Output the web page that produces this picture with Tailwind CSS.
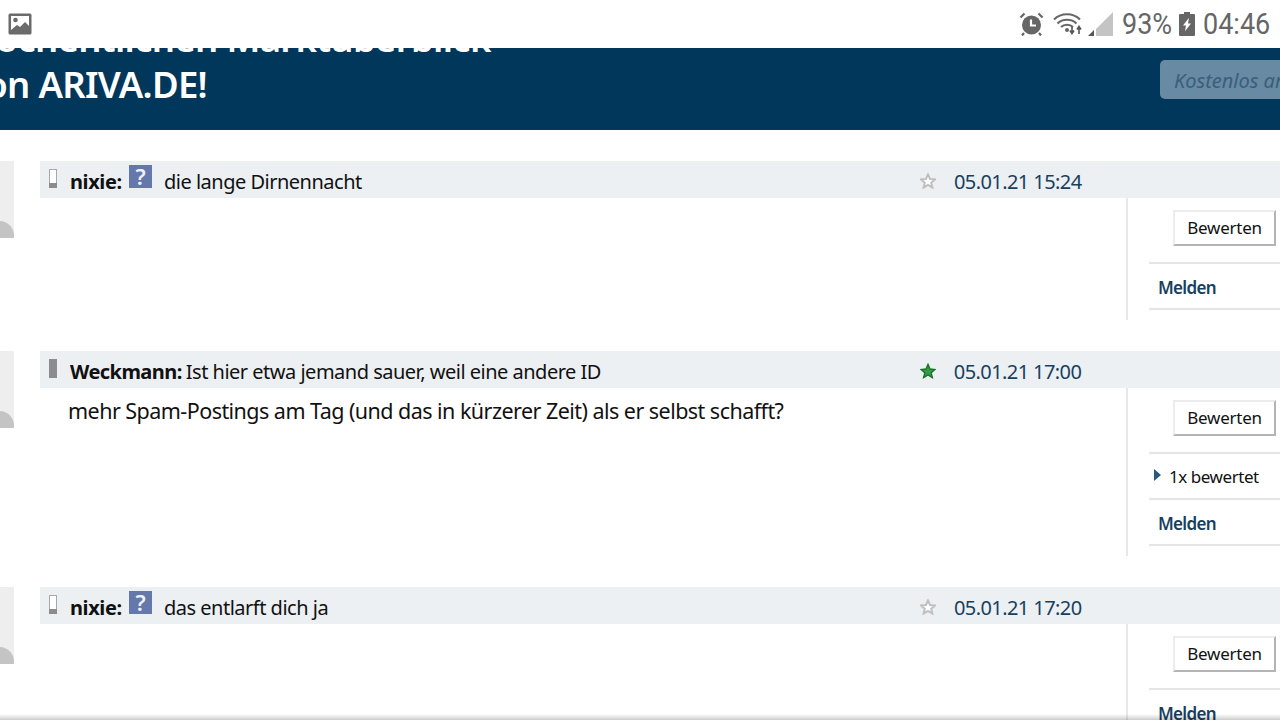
<!DOCTYPE html>
<html lang="de">
<head>
  <meta charset="UTF-8">
  <title>ARIVA.DE</title>
  <script src="https://cdn.jsdelivr.net/npm/@tailwindcss/browser@4"></script>
</head>
<body class="bg-white">
  <div class="relative w-[1280px] h-[720px] overflow-hidden bg-white font-['Noto_Sans',sans-serif] text-[#111111]">
    <!-- Status bar -->
    <header class="h-12 flex items-center justify-between pl-2 pr-[11px] pb-px bg-white font-['Roboto',sans-serif] text-[#666666]">
      <svg class="w-6 h-[22px]" viewBox="0 0 24 22">
        <rect x="0.5" y="0.5" width="23" height="21" rx="1.5" fill="#6b6b6b"/>
        <rect x="3" y="3" width="18" height="14" fill="#fff"/>
        <circle cx="7.5" cy="7" r="2.3" fill="#6b6b6b"/>
        <path d="M3 17l6-5 3 2 5-5 4 4v4z" fill="#6b6b6b"/>
      </svg>
      <div class="flex items-center">
        <svg class="w-[25px] h-6" viewBox="0 0 25 24" fill="none">
          <circle cx="12.5" cy="13" r="9.5" fill="#666"/>
          <path d="M12 7.5v6h5" stroke="#fff" stroke-width="2.2"/>
          <path d="M1.5 5.5l4-4M23.5 5.5l-4-4M5 21l-2 2.500M20 21l2 2.500" stroke="#666" stroke-width="2.200"/>
        </svg>
        <svg class="ml-[9px] w-8 h-[23px]" viewBox="0 0 32 23" fill="none">
          <path d="M1 7.500C8 .5 20 .5 27 7.500M4.500 11.500C9.500 6.500 18.500 6.500 23.500 11.500M8 15C11 12 17 12 20 15" stroke="#666" stroke-width="2"/>
          <circle cx="14" cy="18" r="2" fill="#666"/>
          <path d="M19 15v6M17 18.500l2 3 2-3M26 22v-7M24 17.500l2-3 2 3" stroke="#555" stroke-width="1.600"/>
        </svg>
        <svg class="ml-[3px] w-[25px] h-6" viewBox="0 0 25 24">
          <path d="M25 0v24H8v-7z" fill="#c4c4c4"/>
          <path d="M0 24l6-6v6z" fill="#555"/>
        </svg>
        <span class="ml-[9px] w-12 text-[30px] leading-none whitespace-nowrap scale-x-90 origin-left">93%</span>
        <svg class="ml-[9px] w-4 h-6" viewBox="0 0 16 25" preserveAspectRatio="none">
          <path d="M5 0h6v2h4a1 1 0 0 1 1 1v21a1 1 0 0 1-1 1H1a1 1 0 0 1-1-1V3a1 1 0 0 1 1-1h4z" fill="#666"/>
          <path d="M10 6l-6 8h3l-1 6 6-8H9z" fill="#fff"/>
        </svg>
        <span class="ml-2 w-[66px] text-[30px] leading-none whitespace-nowrap scale-x-90 origin-left">04:46</span>
      </div>
    </header>

    <!-- Banner -->
    <section class="h-[82px] overflow-hidden bg-[#00375b] flex justify-between text-white">
      <div class="-mt-[33px] -ml-[34px] font-semibold text-[36.500px] leading-[46px] whitespace-nowrap tracking-[-0.700px]">
        <p>wöchentlichen Marktüberblick</p>
        <p>von ARIVA.DE!</p>
      </div>
      <div class="mt-3 h-[39px] w-[140px] -mr-5 pl-[14px] rounded-[5px] bg-[#688aa2] text-[#3a5f7c] italic text-xl leading-[41px] whitespace-nowrap overflow-hidden">Kostenlos anmelden</div>
    </section>

    <main class="pt-[31px]">
      <!-- Post 1 -->
      <article class="flex h-[159px]">
        <div class="w-10 shrink-0">
          <div class="relative w-3.5 h-[77px] bg-[#eeeeee] overflow-hidden">
            <div class="absolute -left-[15px] top-[60px] w-[29px] h-[29px] rounded-full bg-[#c4c4c4]"></div>
          </div>
        </div>
        <div class="flex-1">
          <div class="h-[37px] flex items-center pt-1 bg-[#ecf0f3] text-xl">
            <svg class="ml-[9px] w-2 h-[19px] -mt-[6px]" viewBox="0 0 8 19">
              <rect x="0.500" y="0.500" width="7" height="18" fill="#fff" stroke="#a8a8a8"/>
              <rect x="0" y="14" width="8" height="5" fill="#8c8c8c"/>
            </svg>
            <b class="ml-[13px] w-[59px] font-bold tracking-[-0.400px]">nixie:</b>
            <span class="w-[23px] h-[23px] -mt-[10px] bg-[#6478ab] text-white/90 text-center font-semibold text-[22px] leading-[23px]">?</span>
            <span class="ml-3 w-[756px] tracking-[-0.500px] whitespace-nowrap">die lange Dirnennacht</span>
            <svg class="w-4 h-4 -mt-[2px]" viewBox="0 0 24 24" fill="#fff" stroke="#c0c0c0" stroke-width="3"><path d="M12 2l3 7 7.500.7-5.700 5 1.800 7.300L12 18l-6.600 4 1.800-7.300-5.700-5L9 9z"/></svg>
            <time class="ml-[18px] text-[#17405f] tracking-[-0.580px]">05.01.21 15:24</time>
          </div>
          <div class="flex h-[122px]">
            <div class="w-[1086px]"></div>
            <aside class="flex-1 border-l-2 border-[#e6e8e9] pl-[21px]">
              <div class="h-[66px] pt-3 border-b-2 border-[#e4e6e7] pl-6">
                <button class="w-[103px] h-9 border-2 border-[#ececec] border-r-[#b4b4b4] border-b-[#b4b4b4] bg-white text-[17px] leading-8 tracking-[-0.250px]">Bewerten</button>
              </div>
              <div class="h-[46px] flex items-center pt-[3px] border-b-2 border-[#e4e6e7] pl-[9px] text-[#17405f] text-[17px] font-semibold tracking-[-0.700px]">Melden</div>
            </aside>
          </div>
        </div>
      </article>

      <!-- Post 2 -->
      <article class="flex h-[205px] mt-[31px]">
        <div class="w-10 shrink-0">
          <div class="relative w-3.5 h-[77px] bg-[#eeeeee] overflow-hidden">
            <div class="absolute -left-[15px] top-[60px] w-[29px] h-[29px] rounded-full bg-[#c4c4c4]"></div>
          </div>
        </div>
        <div class="flex-1">
          <div class="h-[37px] flex items-center pt-1 bg-[#ecf0f3] text-xl">
            <span class="ml-[9px] w-2 h-[19px] -mt-[6px] bg-[#8c8c8c]"></span>
            <b class="ml-[13px] font-bold tracking-[-0.550px] whitespace-nowrap">Weckmann:</b>
            <span class="ml-1 w-[734px] tracking-[-0.500px] whitespace-nowrap">Ist hier etwa jemand sauer, weil eine andere ID</span>
            <svg class="w-4 h-4 -mt-[2px]" viewBox="0 0 24 24" fill="#2f9e44" stroke="#1b6e2c" stroke-width="2"><path d="M12 2l3 7 7.500.7-5.700 5 1.800 7.300L12 18l-6.600 4 1.800-7.300-5.700-5L9 9z"/></svg>
            <time class="ml-[18px] text-[#17405f] tracking-[-0.580px]">05.01.21 17:00</time>
          </div>
          <div class="flex h-[168px]">
            <div class="w-[1086px] pl-7 pt-2 text-[21.500px] leading-[30px] tracking-[-0.540px] whitespace-nowrap">mehr Spam-Postings am Tag (und das in kürzerer Zeit) als er selbst schafft?</div>
            <aside class="flex-1 border-l-2 border-[#e6e8e9] pl-[21px]">
              <div class="h-[66px] pt-3 border-b-2 border-[#e4e6e7] pl-6">
                <button class="w-[103px] h-9 border-2 border-[#ececec] border-r-[#b4b4b4] border-b-[#b4b4b4] bg-white text-[17px] leading-8 tracking-[-0.250px]">Bewerten</button>
              </div>
              <div class="h-[46px] flex items-center pt-[2px] border-b-2 border-[#e4e6e7] pl-[5px] text-[17px] tracking-[-0.450px]">
                <span class="w-0 h-0 border-y-[6px] border-y-transparent border-l-[7px] border-l-[#26597f] -mt-1"></span>
                <span class="ml-2 whitespace-nowrap">1x bewertet</span>
              </div>
              <div class="h-[46px] flex items-center pt-[3px] border-b-2 border-[#e4e6e7] pl-[9px] text-[#17405f] text-[17px] font-semibold tracking-[-0.700px]">Melden</div>
            </aside>
          </div>
        </div>
      </article>

      <!-- Post 3 -->
      <article class="flex mt-[31px]">
        <div class="w-10 shrink-0">
          <div class="relative w-3.5 h-[77px] bg-[#eeeeee] overflow-hidden">
            <div class="absolute -left-[15px] top-[60px] w-[29px] h-[29px] rounded-full bg-[#c4c4c4]"></div>
          </div>
        </div>
        <div class="flex-1">
          <div class="h-[37px] flex items-center pt-1 bg-[#ecf0f3] text-xl">
            <svg class="ml-[9px] w-2 h-[19px] -mt-[6px]" viewBox="0 0 8 19">
              <rect x="0.500" y="0.500" width="7" height="18" fill="#fff" stroke="#a8a8a8"/>
              <rect x="0" y="14" width="8" height="5" fill="#8c8c8c"/>
            </svg>
            <b class="ml-[13px] w-[59px] font-bold tracking-[-0.400px]">nixie:</b>
            <span class="w-[23px] h-[23px] -mt-[10px] bg-[#6478ab] text-white/90 text-center font-semibold text-[22px] leading-[23px]">?</span>
            <span class="ml-3 w-[756px] tracking-[-0.500px] whitespace-nowrap">das entlarft dich ja</span>
            <svg class="w-4 h-4 -mt-[2px]" viewBox="0 0 24 24" fill="#fff" stroke="#c0c0c0" stroke-width="3"><path d="M12 2l3 7 7.500.7-5.700 5 1.800 7.300L12 18l-6.600 4 1.800-7.300-5.700-5L9 9z"/></svg>
            <time class="ml-[18px] text-[#17405f] tracking-[-0.580px]">05.01.21 17:20</time>
          </div>
          <div class="flex h-[122px]">
            <div class="w-[1086px]"></div>
            <aside class="flex-1 border-l-2 border-[#e6e8e9] pl-[21px]">
              <div class="h-[66px] pt-3 border-b-2 border-[#e4e6e7] pl-6">
                <button class="w-[103px] h-9 border-2 border-[#ececec] border-r-[#b4b4b4] border-b-[#b4b4b4] bg-white text-[17px] leading-8 tracking-[-0.250px]">Bewerten</button>
              </div>
              <div class="h-[46px] flex items-center pt-[3px] border-b-2 border-[#e4e6e7] pl-[9px] text-[#17405f] text-[17px] font-semibold tracking-[-0.700px]">Melden</div>
            </aside>
          </div>
        </div>
      </article>
    </main>

    <!-- Shadow at the bottom of the screen -->
    <div class="absolute left-0 right-0 bottom-0 h-1.5 bg-gradient-to-b from-transparent to-black/20"></div>
  </div>
</body>
</html>
